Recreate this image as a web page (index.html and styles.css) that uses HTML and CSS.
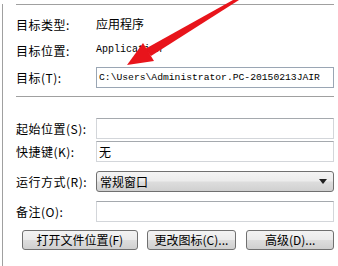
FILE: index.html
```html
<!DOCTYPE html>
<html lang="zh-CN">
<head>
    <meta charset="UTF-8">
    <title>属性</title>
    <link rel="stylesheet" href="styles.css">
</head>
<body>

    <!-- Shortcut properties panel -->
    <div class="panel">
        <div class="rule"></div>

        <div class="row info lead">
            <span class="label">目标类型:</span>
            <span class="value">应用程序</span>
        </div>
        <div class="row info">
            <span class="label">目标位置:</span>
            <span class="value mono">Application</span>
        </div>
        <div class="row field first">
            <span class="label">目标(T):</span>
            <div class="box target mono">C:\Users\Administrator.PC-20150213JAIR</div>
        </div>

        <div class="rule mid"></div>

        <div class="row field start">
            <span class="label">起始位置(S):</span>
            <div class="box"></div>
        </div>
        <div class="row field tight">
            <span class="label">快捷键(K):</span>
            <div class="box">无</div>
        </div>
        <div class="row field">
            <span class="label">运行方式(R):</span>
            <div class="select">
                <span>常规窗口</span>
                <span class="caret"></span>
            </div>
        </div>
        <div class="row field">
            <span class="label">备注(O):</span>
            <div class="box"></div>
        </div>

        <div class="buttons">
            <button class="btn wide">打开文件位置(F)</button>
            <button class="btn mid-btn">更改图标(C)...</button>
            <button class="btn small">高级(D)...</button>
        </div>
    </div>

    <!-- Red annotation arrow -->
    <svg class="arrow" width="338" height="266" viewBox="0 0 338 266">
        <polygon points="233,0 239,0 151,56 145,49" fill="#e8141b"/>
        <polygon points="127,65 143,43 154,61" fill="#e8141b"/>
    </svg>

</body>
</html>
```

FILE: styles.css
```css
/* Basic reset */
* {
    margin: 0;
    padding: 0;
    box-sizing: border-box;
}

body {
    position: relative;
    width: 338px;
    height: 266px;
    overflow: hidden;
    background-color: #ffffff;
    color: #000;
    font-family: "Noto Sans CJK SC", "Liberation Sans", sans-serif;
    font-size: 12px;
}

/* Panel with the left frame line */
.panel {
    height: 266px;
    margin-left: 2px;
    border-left: 1px solid #a0a0a0;
    padding-left: 13px;
    padding-right: 4px;
}

.rule {
    margin-top: 4px;
    width: 318px;
    height: 1px;
    background-color: #a0a0a0;
}
.rule.mid {
    margin-top: 8px;
}

/* Rows */
.row {
    display: flex;
    align-items: center;
}
.row.info {
    height: 26px;
}
.row.info.lead {
    margin-top: 6px;
}
.row.field {
    height: 21px;
    margin-top: 9px;
}
.row.field.first {
    margin-top: 4px;
}
.row.field.start {
    margin-top: 21px;
}
.row.field.tight {
    margin-top: 2px;
}

.label {
    width: 80px;
    flex-shrink: 0;
    white-space: nowrap;
    letter-spacing: 0.5px;
}
.value {
    line-height: 14px;
}
.mono {
    font-family: "Liberation Mono", "DejaVu Sans Mono", monospace;
    font-size: 10px;
}

/* Input boxes */
.box {
    width: 239px;
    height: 21px;
    border: 1px solid #d3d6da;
    border-top-color: #a5a9ae;
    padding-left: 2px;
    line-height: 19px;
    white-space: nowrap;
    overflow: hidden;
}
.box.target {
    border-color: #9aa6b4;
    font-size: 9.7px;
}

/* Dropdown */
.select {
    width: 239px;
    height: 21px;
    border: 1px solid #707070;
    border-radius: 3px;
    background: linear-gradient(#f4f4f4 0%, #ececec 45%, #dcdcdc 55%, #d0d0d0 100%);
    display: flex;
    align-items: center;
    justify-content: space-between;
    padding-left: 3px;
    padding-right: 6px;
}
.caret {
    width: 0;
    height: 0;
    border-left: 4px solid transparent;
    border-right: 4px solid transparent;
    border-top: 5px solid #202020;
}

/* Bottom buttons */
.buttons {
    display: flex;
    margin-top: 8px;
    margin-left: 6px;
    gap: 9px;
}
.btn {
    height: 20px;
    border: 1px solid #707070;
    border-radius: 3px;
    background: linear-gradient(#f3f3f3 0%, #ebebeb 48%, #dddddd 52%, #cfcfcf 100%);
    font-family: "Noto Sans CJK SC", "Liberation Sans", sans-serif;
    font-size: 12px;
    color: #000;
    line-height: 18px;
}
.btn.wide {
    width: 116px;
}
.btn.mid-btn {
    width: 90px;
}
.btn.small {
    width: 88px;
    margin-left: 1px;
}

/* Annotation overlay */
.arrow {
    position: absolute;
    left: 0;
    top: 0;
    pointer-events: none;
}
```
